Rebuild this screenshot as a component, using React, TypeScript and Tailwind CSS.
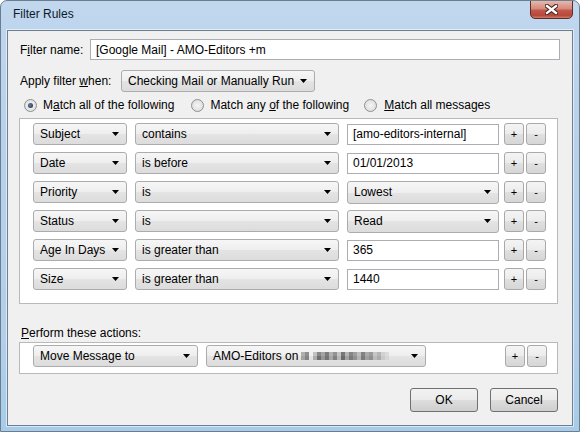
import React from 'react';

const rules = [
    { field: 'Subject', op: 'contains', value: '[amo-editors-internal]', kind: 'text' },
    { field: 'Date', op: 'is before', value: '01/01/2013', kind: 'text' },
    { field: 'Priority', op: 'is', value: 'Lowest', kind: 'select' },
    { field: 'Status', op: 'is', value: 'Read', kind: 'select' },
    { field: 'Age In Days', op: 'is greater than', value: '365', kind: 'text' },
    { field: 'Size', op: 'is greater than', value: '1440', kind: 'text' },
];

// pixelated (blurred) account name
const blurTop = ['#b0b0b0', '#8f8f8f', '', '#c2c2c2', '#888888', '#a4a4a4', '#7c7c7c', '#b1b1b1', '#929292', '#c4c4c4', '#777777', '#b4b4b4', '#858585', '#9e9e9e', '#bdbdbd', '#828282', '#aaaaaa', '#9a9a9a', '#c6c6c6', '#b6b6b6', '#d2d2d2', '#dcdcdc'];
const blurBottom = ['#a3a3a3', '#858585', '', '#acacac', '#6e6e6e', '#969696', '#747474', '#a6a6a6', '#808080', '#b7b7b7', '#6a6a6a', '#a2a2a2', '#7a7a7a', '#919191', '#b4b4b4', '#7b7b7b', '#9f9f9f', '#8f8f8f', '#bcbcbc', '#acacac', '#cacaca', '#d6d6d6'];

const Arrow = () => (
    <svg width="7" height="4" viewBox="0 0 7 4" className="shrink-0">
        <path d="M0 0H7L3.5 4Z" fill="#000" />
    </svg>
);

function Combo({ w, h = 'h-[22px]', children }: { w: string; h?: string; children: React.ReactNode }) {
    return (
        <div className={`${w} ${h} shrink-0 flex items-center justify-between pl-[6px] pr-[7px] border border-[#acacac] rounded-[3px] bg-[linear-gradient(#f6f6f6,#eeeeee_50%,#e4e4e4_50%,#dcdcdc)] whitespace-nowrap overflow-hidden`}>
            <span className="flex items-center">{children}</span>
            <Arrow />
        </div>
    );
}

function TextBox({ w, value }: { w: string; value: string }) {
    return (
        <div className={`${w} h-[21px] shrink-0 flex items-center pl-[5px] bg-white border border-[#abadb3] whitespace-nowrap overflow-hidden`}>
            {value}
        </div>
    );
}

function SmallBtn({ label }: { label: string }) {
    return (
        <div className="w-[20px] h-[22px] shrink-0 flex items-center justify-center border border-[#a9a9a9] rounded-[3px] bg-[linear-gradient(#f4f4f4,#ececec_50%,#e0e0e0_50%,#d6d6d6)] text-[11px]">
            {label}
        </div>
    );
}

function Radio({ checked }: { checked?: boolean }) {
    return (
        <div className="w-[13px] h-[13px] shrink-0 rounded-full border border-[#8e8f8f] bg-[radial-gradient(circle,#f4f4f4,#d9d9d9)] flex items-center justify-center">
            {checked && <div className="w-[5px] h-[5px] rounded-full bg-[radial-gradient(circle_at_40%_40%,#5f7d9c,#1b2f45)]" />}
        </div>
    );
}

function Button({ label }: { label: string }) {
    return (
        <div className="w-[68px] h-[24px] flex items-center justify-center border border-[#707070] rounded-[3px] bg-[linear-gradient(#f2f2f2,#ebebeb_50%,#dddddd_50%,#cfcfcf)]">
            {label}
        </div>
    );
}

export default function App() {
    return (
        <div className="w-[580px] h-[432px] relative overflow-hidden rounded-t-[7px] border border-[#6b7d8f] bg-[linear-gradient(180deg,#c0d7ee,#b8d2eb_30%,#b1cfea_80%,#a6cce9)] font-['Liberation_Sans',Arial,sans-serif] text-[12px] text-black">
            {/* title bar */}
            <div className="h-[29px] pl-[12px] pt-[6px] leading-[15px] text-[#0c1a2a]">Filter Rules</div>

            {/* close button */}
            <div className="absolute left-[529px] top-[-1px] w-[43px] h-[19px] rounded-b-[5px] border border-[#5e2f29] bg-[linear-gradient(#e6b9ad,#d58a7c_45%,#c2574a_55%,#b8493c_85%,#cf7b6b)] flex items-center justify-center">
                <svg width="13" height="11" viewBox="0 0 13 11">
                    <path d="M2 2L11 9M11 2L2 9" stroke="#4a2420" strokeWidth="4.4" strokeLinecap="square" />
                    <path d="M2 2L11 9M11 2L2 9" stroke="#ffffff" strokeWidth="2.3" strokeLinecap="square" />
                </svg>
            </div>

            {/* client area */}
            <div className="ml-[6px] w-[566px] h-[396px] border border-[#6f7f8f] bg-[#f0f0f0] shadow-[0_0_0_1px_rgba(255,255,255,0.55)]">
                {/* filter name */}
                <div className="flex items-center pl-[12px] pt-[8px]">
                    <span className="w-[70px]">F<u>i</u>lter name:</span>
                    <TextBox w="w-[470px]" value="[Google Mail] - AMO-Editors +m" />
                </div>

                {/* apply when */}
                <div className="flex items-center pl-[12px] mt-[10px]">
                    <span className="w-[101px]">Apply filter <u>w</u>hen:</span>
                    <Combo w="w-[194px]">Checking Mail or Manually Run</Combo>
                </div>

                {/* match mode */}
                <div className="flex items-center h-[16px] pl-[16px] mt-[5px]">
                    <Radio checked />
                    <span className="ml-[6px]">M<u>a</u>tch all of the following</span>
                    <span className="ml-[17px]"><Radio /></span>
                    <span className="ml-[6px]">Match any <u>o</u>f the following</span>
                    <span className="ml-[15px]"><Radio /></span>
                    <span className="ml-[7px]"><u>M</u>atch all messages</span>
                </div>

                {/* rules list */}
                <div className="ml-[11px] mt-[5px] w-[539px] bg-white border border-[#b9b9b9] pt-[4px] pb-[13px] pl-[13px] flex flex-col gap-[7px]">
                    {rules.map((r) => (
                        <div key={r.field} className="flex items-center h-[22px]">
                            <Combo w="w-[94px]">{r.field}</Combo>
                            <div className="ml-[8px]">
                                <Combo w="w-[204px]">{r.op}</Combo>
                            </div>
                            <div className="ml-[8px]">
                                {r.kind === 'select' ? (
                                    <Combo w="w-[152px]" h="h-[23px]">{r.value}</Combo>
                                ) : (
                                    <TextBox w="w-[152px]" value={r.value} />
                                )}
                            </div>
                            <div className="ml-[5px] flex gap-[2px]">
                                <SmallBtn label="+" />
                                <SmallBtn label="-" />
                            </div>
                        </div>
                    ))}
                </div>

                {/* actions */}
                <div className="pl-[13px] mt-[22px] h-[15px] leading-[15px]"><u>P</u>erform these actions:</div>
                <div className="ml-[11px] mt-[1px] w-[539px] bg-white border border-[#b9b9b9] pt-[2px] pb-[6px] pl-[13px] flex items-center">
                    <Combo w="w-[165px]">Move Message to</Combo>
                    <div className="ml-[8px]">
                        <Combo w="w-[220px]">
                            AMO-Editors on
                            <span className="ml-[3px] flex flex-col">
                                <span className="flex">
                                    {blurTop.map((c, i) => (
                                        <span key={i} className="w-[4px] h-[4px]" style={{ backgroundColor: c || 'transparent' }} />
                                    ))}
                                </span>
                                <span className="flex">
                                    {blurBottom.map((c, i) => (
                                        <span key={i} className="w-[4px] h-[4px]" style={{ backgroundColor: c || 'transparent' }} />
                                    ))}
                                </span>
                            </span>
                        </Combo>
                    </div>
                    <div className="ml-[79px] flex gap-[2px]">
                        <SmallBtn label="+" />
                        <SmallBtn label="-" />
                    </div>
                </div>

                {/* dialog buttons */}
                <div className="flex justify-end gap-[12px] pr-[14px] mt-[14px]">
                    <Button label="OK" />
                    <Button label="Cancel" />
                </div>
            </div>
        </div>
    );
}
